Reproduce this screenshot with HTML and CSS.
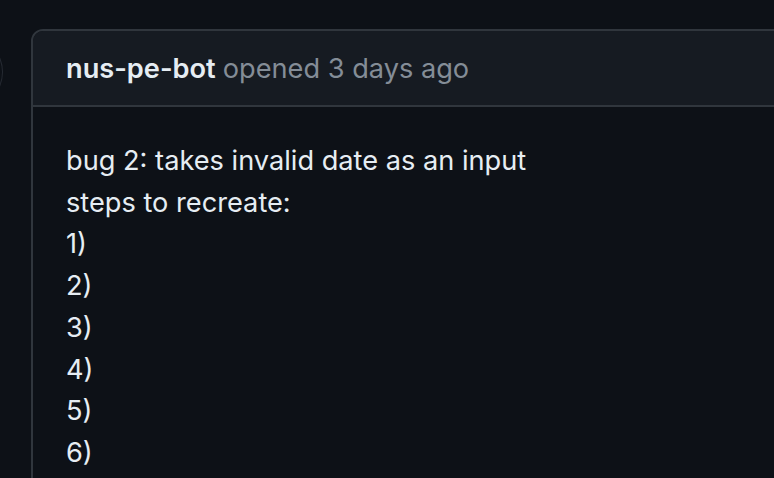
FILE: index.html
```html
<!DOCTYPE html>
<html>
<head>
<meta charset="utf-8">
<link rel="stylesheet" href="styles.css">
</head>
<body>
<div class="page">
  <div class="avatar"></div>
  <div class="comment">
    <div class="comment-header">
      <span class="author">nus-pe-bot</span> <span class="meta">opened 3 days ago</span>
    </div>
    <div class="comment-body">
      <p>bug 2: takes invalid date as an input<br>steps to recreate:<br>1)<br>2)<br>3)<br>4)<br>5)<br>6)</p>
    </div>
  </div>
</div>
</body>
</html>
```
FILE: styles.css
```css
html, body {
  margin: 0;
  padding: 0;
  background: #0d1117;
  overflow: hidden;
  height: 478px;
}
body {
  font-family: Inter, "Noto Sans", sans-serif;
  color: #e6edf3;
}
.page {
  position: relative;
  padding: 29px 0 0 31px;
  width: 743px;
  height: 449px;
  overflow: hidden;
}
.avatar {
  position: absolute;
  left: -70px;
  top: 36px;
  width: 72px;
  height: 72px;
  border-radius: 50%;
  box-shadow: 0 0 0 1px #262b33;
}
.comment {
  border: 2px solid #30363d;
  border-radius: 12px;
  width: 860px;
  overflow: hidden;
}
.comment-header {
  background: #161b22;
  border-bottom: 2px solid #30363d;
  height: 74px;
  display: flex;
  align-items: center;
  padding-left: 33px;
  font-size: 27.2px;
  gap: 7px;
}
.author {
  font-weight: 600;
  color: #e6edf3;
}
.meta {
  color: #848d97;
}
.comment-body {
  padding: 33px 33px;
}
.comment-body p {
  margin: 0;
  font-size: 27.2px;
  line-height: 41.7px;
}
```
